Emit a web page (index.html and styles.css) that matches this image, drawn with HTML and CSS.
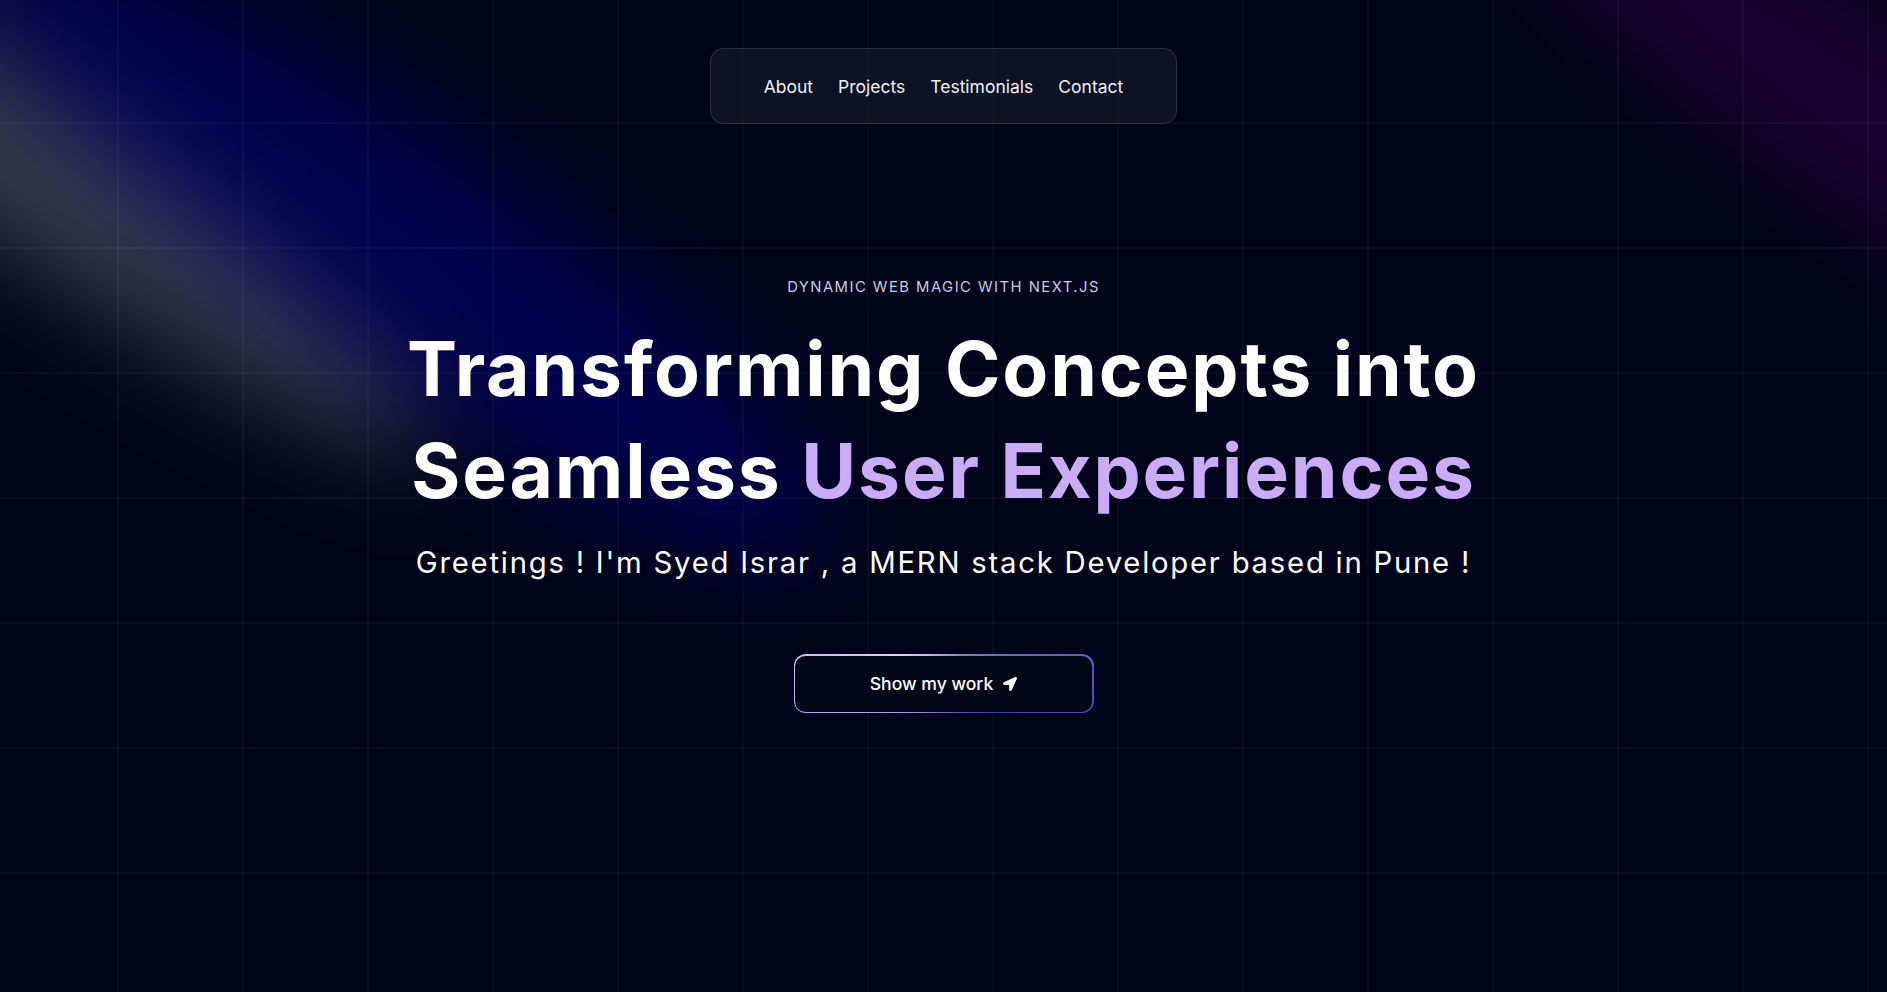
FILE: index.html
```html
<!DOCTYPE html>
<html lang="en">
<head>
<meta charset="utf-8">
<title>Syed Israr — Portfolio</title>
<link rel="stylesheet" href="styles.css">
</head>
<body>
<main class="page">
  <div class="grid-bg"></div>
  <div class="spot spot-white"></div>
  <div class="spot spot-blue"></div>
  <div class="spot spot-purple"></div>

  <header class="nav-wrap">
    <nav class="nav">
      <a class="nav-link" href="#about">About</a>
      <a class="nav-link" href="#projects">Projects</a>
      <a class="nav-link" href="#testimonials">Testimonials</a>
      <a class="nav-link" href="#contact">Contact</a>
    </nav>
  </header>

  <section class="hero">
    <p class="eyebrow">Dynamic Web Magic with Next.js</p>
    <h1 class="title">Transforming Concepts into<br>Seamless <span class="accent">User Experiences</span></h1>
    <p class="greeting">Greetings ! I'm Syed Israr , a MERN stack Developer based in Pune !</p>
    <a class="magic-btn" href="#projects">
      <span class="magic-inner">
        <span>Show my work</span>
        <svg class="btn-icon" viewBox="0 0 512 512" aria-hidden="true"><path d="M444.52 3.52L28.74 195.42c-47.97 22.39-31.98 92.75 19.19 92.75h175.91v175.91c0 51.170 70.36 67.17 92.75 19.19l191.9-415.78c15.99-38.39-25.59-79.97-63.97-63.97z"/></svg>
      </span>
    </a>
  </section>
</main>
</body>
</html>
```

FILE: styles.css
```css
* { box-sizing: border-box; }

html, body {
  margin: 0;
  padding: 0;
}

body {
  background: #000319;
  font-family: Inter, "Noto Sans", sans-serif;
  color: #ffffff;
}

.page {
  position: relative;
  min-height: 992px;
  overflow: hidden;
  background: #000319;
  display: flex;
  flex-direction: column;
  align-items: center;
}

.grid-bg {
  position: absolute;
  inset: 0;
  pointer-events: none;
  background-image:
    linear-gradient(to right, rgba(255, 255, 255, 0.035) 2px, transparent 2px),
    linear-gradient(to bottom, rgba(255, 255, 255, 0.035) 2px, transparent 2px);
  background-size: 125px 125px;
  background-position: 117px 122px;
}

.spot {
  position: absolute;
  border-radius: 50%;
  transform: rotate(34.7deg);
  pointer-events: none;
}

.spot-white {
  left: -860px;
  top: -40px;
  width: 1420px;
  height: 170px;
  background: rgba(255, 255, 255, 0.21);
  filter: blur(50px);
}

.spot-blue {
  left: -130px;
  top: 130px;
  width: 1040px;
  height: 230px;
  background: rgba(0, 0, 255, 0.22);
  filter: blur(45px);
}

.spot-purple {
  left: 1407px;
  top: 38px;
  width: 960px;
  height: 180px;
  background: rgba(128, 0, 128, 0.21);
  filter: blur(45px);
}

.nav-wrap {
  position: relative;
  z-index: 2;
  padding-top: 48px;
  display: flex;
  justify-content: center;
}

.nav {
  display: flex;
  align-items: center;
  gap: 25px;
  height: 76px;
  padding: 0 53px;
  background: rgba(17, 25, 40, 0.75);
  border: 1px solid rgba(255, 255, 255, 0.125);
  border-radius: 14px;
}

.nav-link {
  color: #eef0f5;
  text-decoration: none;
  font-size: 17.5px;
}

.hero {
  position: relative;
  z-index: 2;
  display: flex;
  flex-direction: column;
  align-items: center;
  text-align: center;
}

.eyebrow {
  margin: 154px 0 0;
  font-size: 14.8px;
  line-height: 19.2px;
  letter-spacing: 0.1em;
  text-transform: uppercase;
  color: #c8cce4;
}

.title {
  margin: 21px 0 0;
  font-size: 75px;
  font-weight: 700;
  line-height: 101.75px;
  letter-spacing: 0.025em;
  color: #ffffff;
}

.accent {
  color: #cbacf9;
}

.greeting {
  margin: 22px 0 0;
  font-size: 29.3px;
  line-height: 38.4px;
  letter-spacing: 0.06em;
  color: #ffffff;
}

.magic-btn {
  display: block;
  margin-top: 72px;
  width: 300px;
  height: 59px;
  padding: 1.5px;
  border-radius: 12px;
  background: conic-gradient(from 300deg at 50% 50%, #e2cbff 0%, #393bb2 50%, #e2cbff 100%);
  text-decoration: none;
}

.magic-inner {
  display: flex;
  align-items: center;
  justify-content: center;
  gap: 10px;
  width: 100%;
  height: 100%;
  border-radius: 10.5px;
  background: #020617;
  color: #ffffff;
  font-size: 17.6px;
  font-weight: 500;
}

.btn-icon {
  width: 14px;
  height: 14px;
  fill: #ffffff;
}
```
